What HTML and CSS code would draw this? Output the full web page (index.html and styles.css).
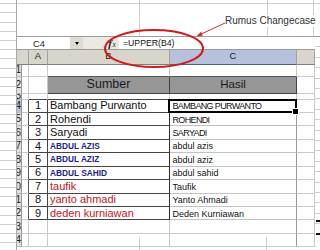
FILE: index.html
```html
<!DOCTYPE html>
<html>
<head>
<meta charset="utf-8">
<link rel="stylesheet" href="styles.css">
</head>
<body>
<div class="screen">
  <div class="left-strip"></div>
  <div class="top-strip">
    <div></div><div></div><div></div><div class="last"></div>
    <div class="bt"></div><div class="bt"></div><div class="bt"></div><div class="bt last"></div>
  </div>
  <div class="window">
    <div class="fbar">
      <div class="namebox">C4</div>
      <div class="dd"><span class="tri"></span></div>
      <div class="fsp"></div>
      <div class="fx"><i>f</i><span class="fxx">x</span></div>
      <div class="finput">=UPPER(B4)</div>
    </div>
    <div class="sheet">
      <div class="row r-ch">
        <div class="corner"></div><div class="ch">A</div><div class="ch">B</div><div class="ch sel">C</div><div class="ch"></div>
      </div>
      <div class="row r1">
        <div class="rh">1</div><div></div><div></div><div class="hb"></div><div class="hb"></div><div></div>
      </div>
      <div class="row r2">
        <div class="rh">2</div><div></div><div></div><div class="hdr sumber">Sumber</div><div class="hdr hasil">Hasil</div><div></div>
      </div>
      <div class="row r3">
        <div class="rh">3</div><div></div><div class="tt"></div><div class="tt"></div><div></div><div></div>
      </div>
      <div class="row rd">
        <div class="rh rsel">4</div><div class="xa"></div><div class="ta num">1</div><div class="tb">Bambang Purwanto</div><div class="tc up c4">BAMBANG PURWANTO</div><div></div>
      </div>
      <div class="row rd">
        <div class="rh">5</div><div class="xa"></div><div class="ta num">2</div><div class="tb">Rohendi</div><div class="tc up">ROHENDI</div><div></div>
      </div>
      <div class="row rd">
        <div class="rh">6</div><div class="xa"></div><div class="ta num">3</div><div class="tb">Saryadi</div><div class="tc up">SARYADI</div><div></div>
      </div>
      <div class="row rd">
        <div class="rh">7</div><div class="xa"></div><div class="ta num">4</div><div class="tb blue">ABDUL AZIS</div><div class="tc">abdul azis</div><div></div>
      </div>
      <div class="row rd">
        <div class="rh">8</div><div class="xa"></div><div class="ta num">5</div><div class="tb blue">ABDUL AZIZ</div><div class="tc">abdul aziz</div><div></div>
      </div>
      <div class="row rd">
        <div class="rh">9</div><div class="xa"></div><div class="ta num">6</div><div class="tb blue">ABDUL SAHID</div><div class="tc">abdul sahid</div><div></div>
      </div>
      <div class="row rd">
        <div class="rh">10</div><div class="xa"></div><div class="ta num">7</div><div class="tb red">taufik</div><div class="tc">Taufik</div><div></div>
      </div>
      <div class="row rd">
        <div class="rh">11</div><div class="xa"></div><div class="ta num">8</div><div class="tb red">yanto ahmadi</div><div class="tc">Yanto Ahmadi</div><div></div>
      </div>
      <div class="row rd">
        <div class="rh">12</div><div class="xa"></div><div class="ta num">9</div><div class="tb red">deden kurniawan</div><div class="tc">Deden Kurniawan</div><div></div>
      </div>
      <div class="row rd">
        <div class="rh">13</div><div></div><div></div><div></div><div class="tc0"></div><div></div>
      </div>
      <div class="row rd">
        <div class="rh">14</div><div></div><div></div><div></div><div class="tc0"></div><div></div>
      </div>
    </div>
  </div>
  <div class="right-strip"><span class="dash"></span><span class="dash"></span></div>
  <div class="bottom-strip"><div></div><div></div><div class="last"></div></div>

  <svg class="annot" width="320" height="250" viewBox="0 0 320 250">
    <ellipse cx="154" cy="48.5" rx="49" ry="18.5" fill="none" stroke="#d31a1a" stroke-width="2"/>
    <line x1="225" y1="23" x2="200" y2="34.6" stroke="#c83030" stroke-width="1"/>
    <polygon points="196.5,36.3 202.8,35.8 201,31.8" fill="#c83030"/>
  </svg>
  <div class="label">Rumus Changecase</div>
</div>
</body>
</html>
```
FILE: styles.css
```css
* { box-sizing: border-box; margin: 0; padding: 0; }
html, body { width: 320px; height: 250px; overflow: hidden; background: #fff; }
body { font-family: "Liberation Sans", Arial, sans-serif; color: #111; }

.screen {
  position: relative;
  width: 320px;
  height: 250px;
  display: grid;
  grid-template-columns: 17px 298px 5px;
  grid-template-rows: 37px 200px 13px;
}

/* background sheet pieces */
.left-strip {
  grid-column: 1;
  grid-row: 1 / 4;
  border-right: 1px solid #a8a8a8;
  background: repeating-linear-gradient(to bottom, transparent 0 3.2px, #d0d0d0 3.2px 4.2px, transparent 4.2px 9.2px);
}
.top-strip {
  grid-column: 2 / 4;
  grid-row: 1;
  display: grid;
  grid-template-columns: 123px 128px 46px 1fr;
  grid-template-rows: 4px 1fr;
}
.top-strip > div { border-right: 1px solid #cfcfcf; border-bottom: 1px solid #cfcfcf; }
.top-strip > .last { border-right: none; }
.top-strip > .bt { border-bottom-color: #9c9c9c; }

.right-strip {
  grid-column: 3;
  grid-row: 2;
  background: repeating-linear-gradient(to bottom, transparent 0 9.4px, #cfcfcf 9.4px 10.4px);
  display: flex;
  flex-direction: column;
  padding-top: 183px;
  gap: 10.5px;
}
.dash { display: block; height: 2px; margin-left: 1px; background: #111; }

.bottom-strip {
  grid-column: 2 / 4;
  grid-row: 3;
  display: grid;
  grid-template-columns: 123px 127px 1fr;
}
.bottom-strip > div { border-right: 1px solid #cfcfcf; }
.bottom-strip > .last { border-right: none; }

/* excel window */
.window { grid-column: 2; grid-row: 2; display: flex; flex-direction: column; }

.fbar {
  height: 14px;
  display: flex;
  background: #ece9e2;
  border-bottom: 1px solid #9a9a9a;
  font-size: 9.4px;
}
.namebox { width: 53px; background: #fff; padding-left: 16px; display: flex; align-items: center; color: #222; }
.dd { width: 13px; background: #dedbd3; display: flex; align-items: center; justify-content: center; }
.tri { width: 0; height: 0; border-left: 2.5px solid transparent; border-right: 2.5px solid transparent; border-top: 3px solid #000; }
.fsp { width: 22px; }
.fx { width: 14px; display: flex; align-items: center; justify-content: center; font-family: "Liberation Serif", serif; font-size: 11px; color: #222; }
.fx i { font-weight: bold; }
.fxx { font-size: 7.5px; font-style: italic; margin-left: 0.5px; margin-top: 3px; }
.finput { flex: 1; background: #fff; padding-left: 4px; font-size: 8.7px; display: flex; align-items: center; color: #111; }

.sheet { flex: 1; display: flex; flex-direction: column; }
.row { display: grid; grid-template-columns: 5px 7px 19px 122px 127px 18px; }
.r-ch { height: 14.5px; }
.r1 { height: 12px; }
.r2 { height: 17px; }
.r3 { height: 6px; }
.rd { flex: 1; min-height: 0; }

.row > div {
  border-right: 1px solid #cacaca;
  border-bottom: 1px solid #cacaca;
  display: flex;
  align-items: flex-end;
  overflow: hidden;
  white-space: nowrap;
  font-size: 11px;
  line-height: 1.15;
}

/* headers */
.r-ch > div {
  background: #d8d5cd;
  border-right-color: #a2a2a2;
  border-bottom-color: #7f7f7f;
  align-items: center;
  justify-content: center;
  font-size: 9.5px;
  color: #222;
}
.r-ch > .corner { grid-column: span 2; }
.r-ch > .sel { background: #b7c0dc; border-bottom-color: #4f5f88; }

.row > .rh {
  background: #e3e0d9;
  border-right-color: #9a9a9a;
  border-bottom-color: #b9b9b9;
  justify-content: flex-end;
  align-items: center;
  font-size: 10px;
  color: #222;
}
.row > .rsel { background: #b7c0dc; }

/* title row */
.row > .hb { border-bottom-color: #555; }
.row > .hdr {
  background: #969696;
  border-right-color: #444;
  border-bottom-color: #444;
  justify-content: center;
  color: #1a1a1a;
}
.row > .sumber { font-size: 12.5px; padding-bottom: 1px; }
.row > .hasil { font-size: 11.5px; padding-bottom: 1px; }

/* table */
.row > .tt { border-bottom-color: #444; }
.row > .xa { border-right-color: #555; }
.row > .ta { border-right-color: #444; border-bottom-color: #444; justify-content: center; }
.row > .tb { border-right-color: #333; border-bottom-color: #444; padding-left: 2px; }
.row > .tc { border-right-color: #9a9a9a; border-bottom-color: #c2c2c2; padding-left: 2.5px; font-size: 9px; padding-bottom: 0.5px; }
.row > .up { letter-spacing: -0.65px; }
.row > .tc0 { border-right-color: #9a9a9a; }

.row > .blue { font-weight: bold; font-size: 8.3px; color: #23238a; padding-bottom: 1px; }
.row > .red { color: #c8141e; }

.row > .c4 { position: relative; overflow: visible; }
.c4::after {
  content: "";
  position: absolute;
  left: -2px;
  top: -1px;
  right: -1px;
  bottom: -1px;
  border: 2px solid #000;
}
.c4::before {
  content: "";
  position: absolute;
  right: -3px;
  bottom: -3px;
  width: 5px;
  height: 5px;
  background: #000;
  border: 1px solid #fff;
  z-index: 1;
}

/* annotation */
.annot { position: absolute; left: 0; top: 0; pointer-events: none; }
.label {
  position: absolute;
  left: 225px;
  top: 15px;
  font-size: 10px;
  line-height: 12px;
  color: #333;
  background: #fff;
  padding-right: 1px;
}
```
